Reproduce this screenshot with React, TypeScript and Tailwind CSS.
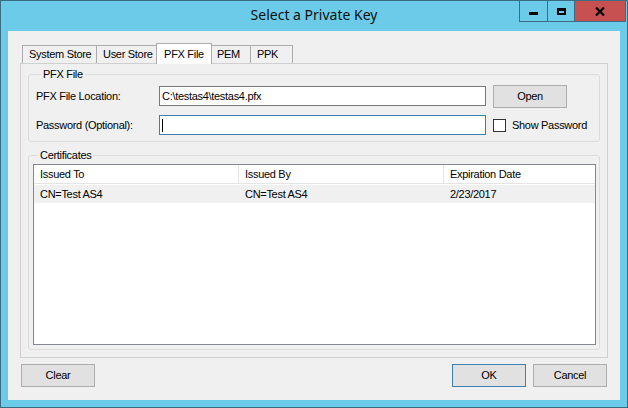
import React from "react";

const ui = { fontFamily: '"Liberation Sans", Arial, sans-serif' };

const Tab = ({ label, active, w }: { label: string; active?: boolean; w: string }) =>
  active ? (
    <div
      className={`${w} h-[21px] -mb-px -mx-px z-10 bg-white border border-b-0 border-[#acacac] flex items-start justify-center pt-[2px] text-[11px] text-black`}
    >
      {label}
    </div>
  ) : (
    <div
      className={`${w} h-[18px] bg-[#f0f0f0] border border-b-0 border-[#acacac] -ml-px first:ml-0 flex items-center pl-[6px] text-[11px] text-black`}
    >
      {label}
    </div>
  );

const WinButton = ({ label, primary, className = "" }: { label: string; primary?: boolean; className?: string }) => (
  <button
    className={`w-[74px] h-[23px] bg-[#e1e1e1] border ${primary ? "border-[#3c7fb1]" : "border-[#adadad]"} text-[11px] text-black flex items-center justify-center ${className}`}
  >
    {label}
  </button>
);

export default function App() {
  return (
    <div
      className="w-[628px] h-[408px] bg-[#6bcbe9] border border-[#3a6d84] flex flex-col overflow-hidden tracking-[-0.3px]"
      style={ui}
    >
      {/* title bar */}
      <div className="relative h-[30px] flex justify-center pt-[3px]">
        <span className="text-[14px] text-[#111] tracking-normal" style={{ fontFamily: '"Noto Sans", "Open Sans", sans-serif' }}>
          Select a Private Key
        </span>
        <div className="absolute top-[-1px] right-[1px] flex h-[22px]">
          <div className="w-[29px] border border-[#3a6d84] flex items-center justify-center">
            <div className="w-[9px] h-[3px] bg-black mt-[4px]" />
          </div>
          <div className="w-[27px] border border-l-0 border-[#3a6d84] flex items-center justify-center">
            <div className="w-[9px] h-[7px] border-2 border-black border-t-[3px]" />
          </div>
          <div className="w-[51px] bg-[#c75050] border border-l-0 border-[#3a6d84] flex items-center justify-center">
            <svg width="10" height="9" viewBox="0 0 10 9">
              <path d="M1 0.5 L9 8.5 M9 0.5 L1 8.5" stroke="#000" strokeWidth="2.2" />
            </svg>
          </div>
        </div>
      </div>

      {/* client area */}
      <div className="mx-[7px] mb-[7px] flex-1 bg-[#f0f0f0] flex flex-col px-[12px]">
        {/* tabs */}
        <div className="mt-[12px] h-[20px] flex items-end pl-[2px]">
          <Tab label="System Store" w="w-[75px]" />
          <Tab label="User Store" w="w-[61px]" />
          <Tab label="PFX File" active w="w-[56px]" />
          <Tab label="PEM" w="w-[41px]" />
          <Tab label="PPK" w="w-[43px]" />
        </div>

        {/* tab page */}
        <div className="h-[295px] border border-[#d0d0d0] bg-[#f0f0f0] flex flex-col px-[7px]">
          <fieldset className="mt-[4px] border border-[#dcdcdc] rounded-[3px] px-[7px] pb-[5px]">
            <legend className="ml-[5px] px-[2px] text-[11px] leading-[13px] text-black">PFX File</legend>
            <div className="mt-[4px] h-[22px] flex items-center">
              <span className="w-[123px] text-[11px] text-black">PFX File Location:</span>
              <div className="w-[327px] h-[20px] bg-white border border-[#7a7a7a] flex items-center px-[2px] text-[11px] text-black">
                C:\testas4\testas4.pfx
              </div>
              <WinButton label="Open" className="ml-[7px] h-[22px]" />
            </div>
            <div className="mt-[7px] h-[22px] flex items-center">
              <span className="w-[123px] text-[11px] text-black">Password (Optional):</span>
              <div className="w-[327px] h-[20px] bg-white border border-[#3c7fb1] flex items-center px-[2px]">
                <div className="w-px h-[13px] bg-black" />
              </div>
              <div className="ml-[7px] w-[13px] h-[13px] bg-white border border-[#333]" />
              <span className="ml-[6px] text-[11px] text-black">Show Password</span>
            </div>
          </fieldset>

          <fieldset className="mt-[7px] border border-[#dcdcdc] rounded-[3px] pl-[4px] pr-[3px] pb-[4px]">
            <legend className="ml-[5px] px-[2px] text-[11px] leading-[13px] text-black">Certificates</legend>
            <div className="mt-[2px] h-[181px] bg-white border border-[#828790] flex flex-col text-[11px] text-black">
              <div className="h-[19px] flex border-b border-[#e5e5e5]">
                <div className="w-[205px] border-r border-[#e5e5e5] flex items-center pl-[6px]">Issued To</div>
                <div className="w-[205px] border-r border-[#e5e5e5] flex items-center pl-[6px]">Issued By</div>
                <div className="flex-1 flex items-center pl-[6px]">Expiration Date</div>
              </div>
              <div className="mt-px h-[18px] flex bg-[#f0f0f0]">
                <div className="w-[205px] flex items-center pl-[6px]">CN=Test AS4</div>
                <div className="w-[205px] flex items-center pl-[6px]">CN=Test AS4</div>
                <div className="flex-1 flex items-center pl-[6px]">2/23/2017</div>
              </div>
            </div>
          </fieldset>
        </div>

        {/* bottom buttons */}
        <div className="mt-[6px] flex items-center pl-px">
          <WinButton label="Clear" />
          <WinButton label="OK" primary className="ml-auto" />
          <WinButton label="Cancel" className="ml-[7px] mr-px" />
        </div>
      </div>
    </div>
  );
}
